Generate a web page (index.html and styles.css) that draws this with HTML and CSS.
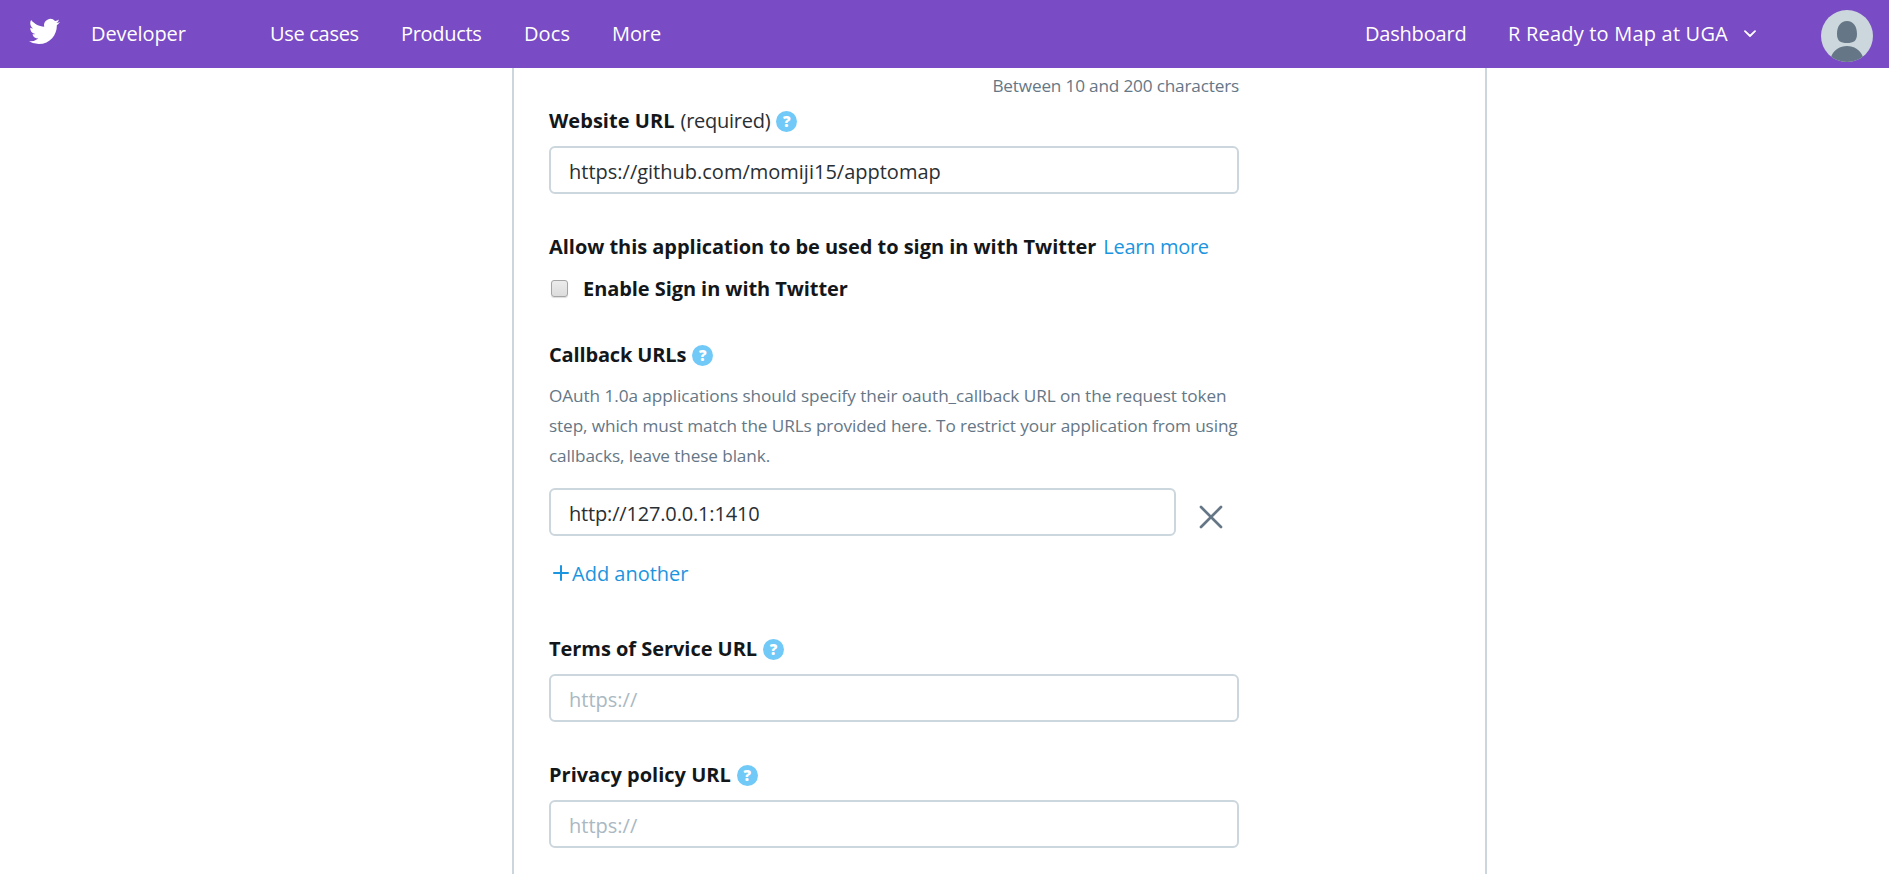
FILE: index.html
```html
<!DOCTYPE html>
<html lang="en">
<head>
<meta charset="utf-8">
<title>Twitter Developer</title>
<link rel="stylesheet" href="styles.css">
</head>
<body>
<header class="topbar">
  <svg class="bird" viewBox="0 0 24 24" preserveAspectRatio="none"><path fill="#fff" d="M23.95 4.57a10 10 0 0 1-2.82.77 4.96 4.96 0 0 0 2.16-2.72c-.95.55-2 .95-3.13 1.18a4.92 4.92 0 0 0-8.38 4.48C7.69 8.09 4.07 6.13 1.64 3.16a4.82 4.82 0 0 0-.67 2.48c0 1.71.87 3.21 2.19 4.1a4.9 4.9 0 0 1-2.23-.62v.06a4.92 4.92 0 0 0 3.95 4.83 5 5 0 0 1-2.21.08 4.94 4.94 0 0 0 4.6 3.42A9.87 9.87 0 0 1 0 19.54a13.99 13.99 0 0 0 7.55 2.21c9.05 0 14-7.5 14-13.98 0-.21 0-.42-.02-.63a9.94 9.94 0 0 0 2.46-2.55z"/></svg>
  <a class="brand">Developer</a>
  <nav class="nav">
    <a class="use">Use cases</a>
    <a class="products">Products</a>
    <a class="docs">Docs</a>
    <a class="more">More</a>
  </nav>
  <div class="account">
    <a class="dashboard">Dashboard</a>
    <a class="team">R Ready to Map at UGA</a>
    <svg class="chevron" viewBox="0 0 12 8"><path d="M1 1.2 6 6 11 1.2" fill="none" stroke="#fff" stroke-width="1.8" stroke-linecap="round" stroke-linejoin="round"/></svg>
    <svg class="avatar" viewBox="0 0 52 52"><defs><clipPath id="round"><circle cx="26" cy="26" r="26"/></clipPath></defs><g clip-path="url(#round)"><rect width="52" height="52" fill="#ccd6dd"/><path fill="#657786" d="M26 11c6.500 0 10 5.500 10 13 0 7-3.500 9-10 9s-10-2-10-9c0-7.500 3.500-13 10-13zM10 47c3-7.500 9-11 16-11s13 3.500 16 11v5H10z"/></g></svg>
  </div>
</header>
<main class="card">
  <div class="form">
    <p class="hint">Between 10 and 200 characters</p>
    <div class="label website"><b>Website URL</b><span class="required">(required)</span><i class="help">?</i></div>
    <div class="field"><span class="site-value">https://github.com/momiji15/apptomap</span></div>
    <div class="label allow"><b>Allow this application to be used to sign in with Twitter</b><a class="link">Learn more</a></div>
    <div class="label enable"><span class="checkbox"></span><b>Enable Sign in with Twitter</b></div>
    <div class="label callback"><b>Callback URLs</b><i class="help">?</i></div>
    <p class="description"><span class="line1">OAuth 1.0a applications should specify their oauth_callback URL on the request token</span><br><span class="line2">step, which must match the URLs provided here. To restrict your application from using</span><br><span class="line3">callbacks, leave these blank.</span></p>
    <div class="callback-row">
      <div class="field"><span class="callback-value">http://127.0.0.1:1410</span></div>
      <svg class="remove" viewBox="0 0 24 24"><path d="M2 2 22 22M22 2 2 22" stroke="#657786" stroke-width="2.700" stroke-linecap="round"/></svg>
    </div>
    <a class="label add"><svg class="plus" viewBox="0 0 16 16"><path d="M8 1v14M1 8h14" stroke="#1b95e0" stroke-width="2" stroke-linecap="round"/></svg><span>Add another</span></a>
    <div class="label terms"><b>Terms of Service URL</b><i class="help">?</i></div>
    <div class="field"><span class="placeholder">https://</span></div>
    <div class="label privacy"><b>Privacy policy URL</b><i class="help">?</i></div>
    <div class="field"><span class="placeholder">https://</span></div>
  </div>
</main>
</body>
</html>
```
FILE: styles.css
```css
* { box-sizing: border-box; }
body { margin: 0; height: 874px; overflow: hidden; background: #fff; color: #14171a; font: 20px/30px "Open Sans", "Noto Sans", sans-serif; white-space: nowrap; }
p { margin: 0; }
.topbar { display: flex; height: 68px; background: #794bc4; color: #fff; }
.topbar a { line-height: 30px; margin-top: 19px; }
.bird { width: 31px; height: 31px; margin: 16px 0 0 29px; flex: none; }
.topbar .brand { width: 179px; margin-left: 31px; letter-spacing: -0.1px; }
.nav { display: flex; }
.use { width: 131px; letter-spacing: -0.3px; }
.products { width: 123px; letter-spacing: -0.3px; }
.docs { width: 88px; letter-spacing: 0.1px; }
.more { letter-spacing: -0.1px; }
.account { display: flex; margin-left: auto; padding-right: 16px; }
.dashboard { width: 143px; letter-spacing: -0.2px; }
.team { width: 236px; letter-spacing: 0.2px; }
.chevron { width: 12px; height: 8px; margin: 30px 65px 0 0; }
.avatar { width: 52px; height: 52px; margin-top: 10px; }
.card { width: 975px; height: 806px; margin-left: 512px; padding: 6px 0 0 35px; border: solid #ccd6dd; border-width: 0 2px; overflow: hidden; }
.form { display: flex; flex-direction: column; width: 690px; }
.hint { height: 24px; line-height: 24px; text-align: right; font-size: 17.2px; letter-spacing: -0.18px; color: #657786; }
.label { display: flex; height: 30px; }
.label b { font-weight: 700; letter-spacing: -0.04px; }
.website { margin: 8px 0 10px; }
.website b { letter-spacing: 0.03px; }
.required { margin-left: 6px; letter-spacing: -0.25px; color: #292f33; }
.help { display: flex; justify-content: center; width: 21px; height: 21px; margin: 5px 0 0 6px; border-radius: 50%; background: #71c9f8; color: #fff; font-size: 15px; font-weight: 800; font-style: normal; line-height: 21px; }
.field { display: flex; height: 48px; padding: 9px 18px 7px; border: 2px solid #ccd6dd; border-radius: 6px; color: #292f33; }
.callback-value { letter-spacing: -0.17px; }
.allow { margin-top: 38px; }
.link { margin-left: 7px; letter-spacing: -0.3px; color: #1b95e0; }
.enable { margin-top: 12px; }
.enable b { letter-spacing: -0.07px; }
.checkbox { width: 17px; height: 17px; margin: 6px 15px 0 2px; border: 1px solid #a5a5a5; border-radius: 3px; background: linear-gradient(#ececec, #dcdcdc); box-shadow: 0 1px 1px #ddd; }
.callback { margin-top: 36px; }
.callback b { letter-spacing: -0.15px; }
.description { margin: 11px 0 17px; font-size: 17.2px; letter-spacing: -0.11px; color: #657786; }
.line1 { letter-spacing: -0.07px; }
.callback-row { display: flex; }
.callback-row .field { width: 627px; }
.remove { width: 24px; height: 24px; margin: 17px 0 0 23px; }
.add { margin-top: 23px; color: #1b95e0; }
.plus { width: 16px; height: 16px; margin: 6px 3px 0 4px; }
.terms { margin: 45px 0 10px; }
.placeholder { color: #aab8c2; }
.privacy { margin: 38px 0 10px; }
.privacy b { letter-spacing: 0; }
```
